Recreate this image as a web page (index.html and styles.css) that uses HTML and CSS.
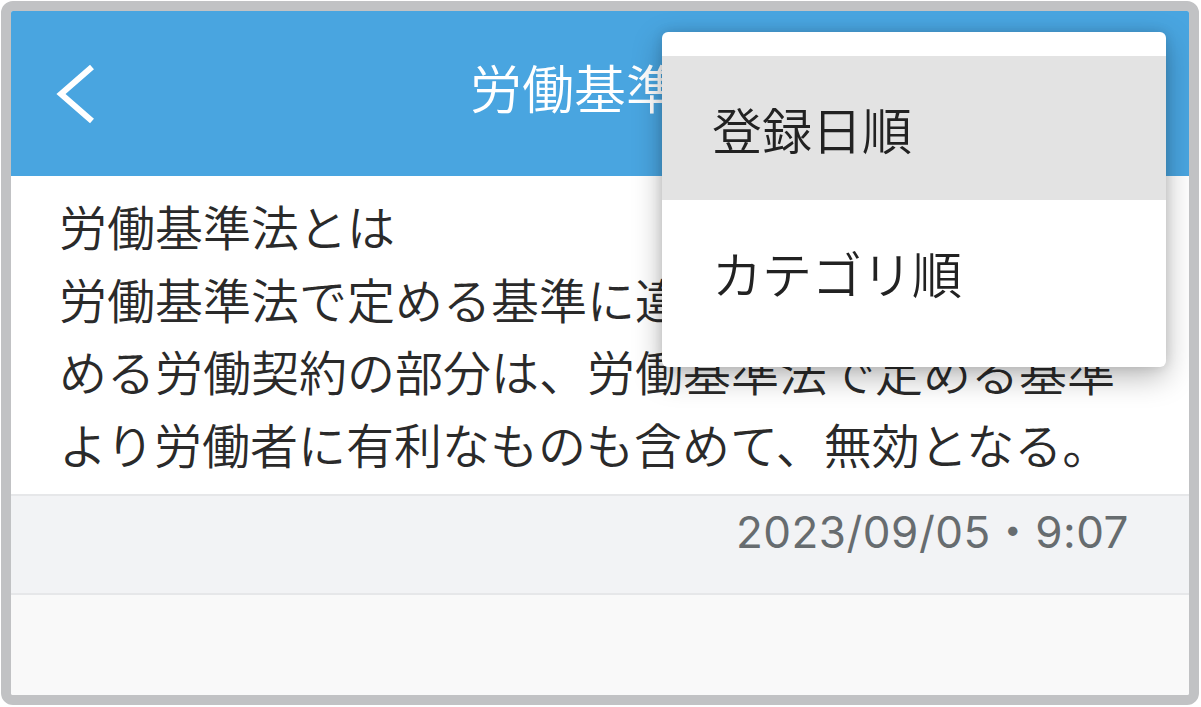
FILE: index.html
```html
<!DOCTYPE html>
<html lang="ja">
<head>
	<meta charset="UTF-8">
	<title>労働基準法</title>
	<link rel="stylesheet" href="styles.css">
</head>
<body>
	<div class="phone">
		<div class="header">
			<a href="javascript:;" class="back">
				<svg width="40" height="60" viewBox="0 0 40 60">
					<polyline points="36,3 5,30 36,57" fill="none" stroke="#fff" stroke-width="6" stroke-miterlimit="10"/>
				</svg>
			</a>
			<div class="title">労働基準法</div>
			<div class="spacer"></div>
		</div>
		<div class="note">
			<p class="note-text">労働基準法とは<br>労働基準法で定める基準に違反する労働条件を定める労働契約の部分は、労働基準法で定める基準より労働者に有利なものも含めて、無効となる。</p>
		</div>
		<div class="meta">2023/09/05・9:07</div>
		<div class="rest"></div>

		<div class="menu">
			<div class="menu-item on">登録日順</div>
			<div class="menu-item">カテゴリ順</div>
		</div>
	</div>
</body>
</html>
```

FILE: styles.css
```css
* {
	margin: 0;
	padding: 0;
	box-sizing: content-box;
}
body {
	background: #fff;
	font-family: "Noto Sans CJK JP", "Noto Sans", sans-serif;
}
.phone {
	margin: 1px;
	width: 1178px;
	height: 684px;
	border: 10px solid #c1c2c4;
	border-radius: 12px;
	overflow: hidden;
	position: relative;
	display: flex;
	flex-direction: column;
	background: #f9f9f9;
}
.header {
	height: 165px;
	background: #49a5e0;
	display: grid;
	grid-template-columns: 1fr auto 1fr;
	align-items: center;
	padding: 0 45px;
}
.back {
	display: flex;
	align-items: center;
	height: 60px;
	width: 40px;
}
.title {
	color: #fff;
	font-size: 52px;
	font-weight: 350;
	line-height: 60px;
	padding-bottom: 14px;
}
.note {
	background: #fff;
	padding: 13px 48px 15px;
	border-bottom: 2px solid #e6e7e9;
}
.note-text {
	font-size: 48px;
	line-height: 72.5px;
	font-weight: 350;
	color: #2a2a2a;
}
.meta {
	background: #f2f3f5;
	height: 83px;
	padding: 14px 60px 0 0;
	border-bottom: 2px solid #e6e7e9;
	text-align: right;
	font-family: Inter, "Noto Sans CJK JP", sans-serif;
	font-size: 44px;
	line-height: 44px;
	letter-spacing: 0.5px;
	color: #676c6f;
}
.rest {
	flex: 1;
	background: #f9f9f9;
}
.menu {
	position: absolute;
	top: 21px;
	left: 651px;
	width: 504px;
	padding: 24px 0 23px;
	background: #fff;
	border-radius: 6px;
	box-shadow: 0 10px 30px rgba(0,0,0,0.28), 0 0 12px rgba(0,0,0,0.12);
}
.menu-item {
	height: 144px;
	display: flex;
	align-items: center;
	padding-left: 50px;
	font-size: 50px;
	font-weight: 350;
	color: #222;
}
.menu .on {
	background: #e3e3e3;
}
```
